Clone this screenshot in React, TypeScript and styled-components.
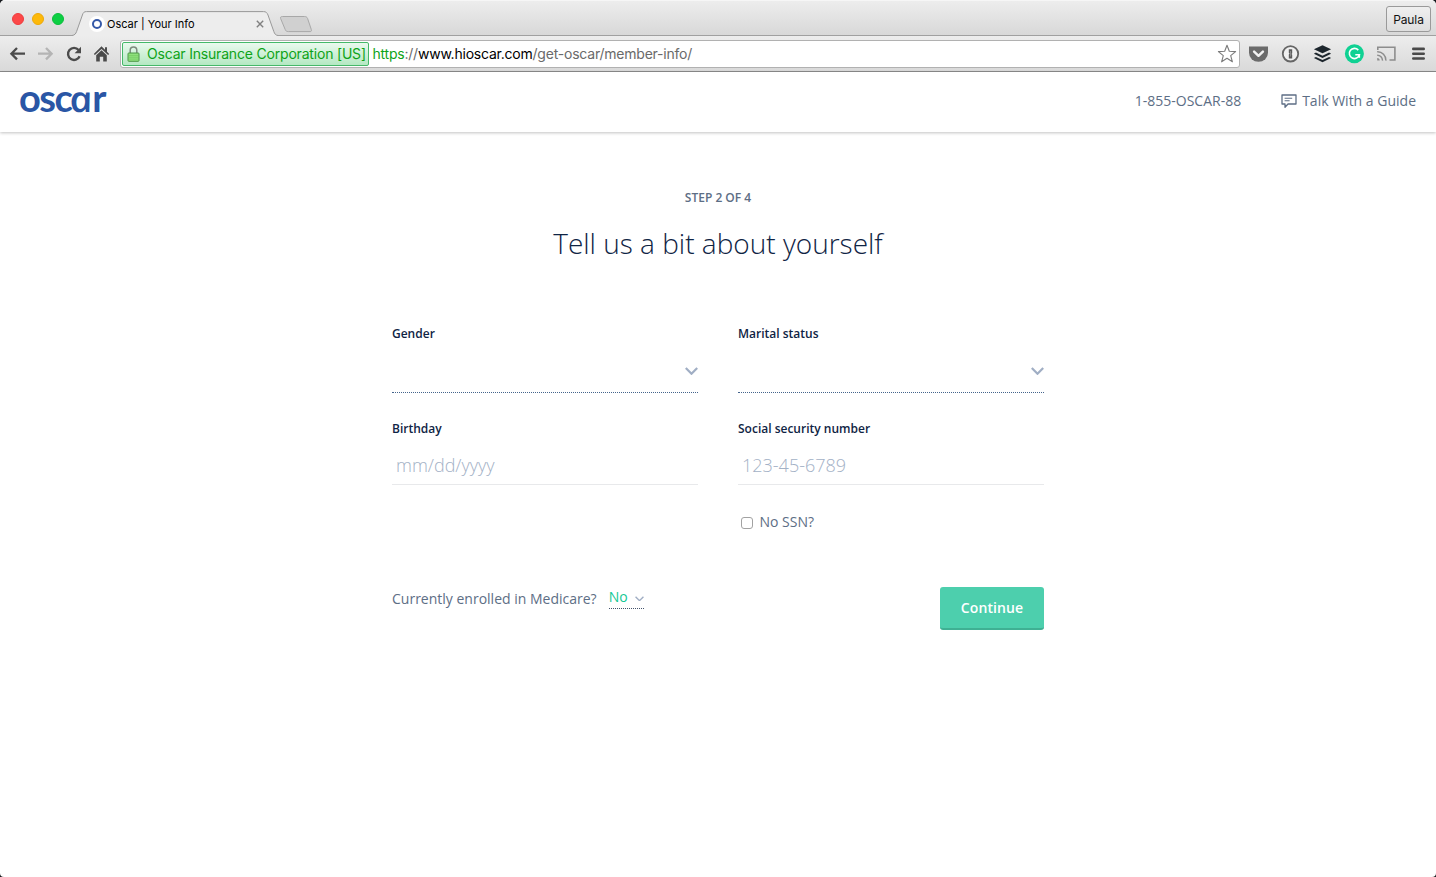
import React from "react";
import styled, { createGlobalStyle } from "styled-components";

const GlobalStyle = createGlobalStyle`
  * { box-sizing: border-box; }
  html, body { margin: 0; padding: 0; background: #16191d; }
  body { font-family: "Open Sans", "Noto Sans", sans-serif; overflow: hidden; }
`;

const Window = styled.div`
  display: flex;
  flex-direction: column;
  width: 1436px;
  height: 877px;
  background: #fff;
  border-radius: 5px 5px 4px 4px;
  overflow: hidden;
`;

const TitleBar = styled.div`
  display: flex;
  align-items: flex-start;
  height: 36px;
  padding: 0 5px 0 12px;
  background: linear-gradient(#ededed, #d8d8d8);
  border-bottom: 1px solid #a0a0a0;
  border-top: 1px solid #f6f6f6;
`;

const Lights = styled.div`
  display: flex;
  gap: 8px;
  margin: 12px 0 0;
`;

const Light = styled.span<{ $fill: string; $edge: string }>`
  width: 12px;
  height: 12px;
  border-radius: 50%;
  background: ${(p) => p.$fill};
  border: 1px solid ${(p) => p.$edge};
`;

const Tab = styled.div`
  position: relative;
  display: flex;
  align-items: center;
  width: 206px;
  height: 25px;
  margin: 10px 0 0 8px;
  padding: 1px 14px 0 17px;
`;

const TabShape = styled.svg`
  position: absolute;
  left: 0;
  top: 0;
`;

const Favicon = styled.span`
  position: relative;
  display: grid;
  place-items: center;
  width: 16px;
  height: 16px;
  border-radius: 50%;
  background: #fff;
  flex: none;
  &::before {
    content: "";
    width: 6px;
    height: 6px;
    border: 2px solid #3559a8;
    border-radius: 50%;
  }
`;

const TabTitle = styled.span`
  position: relative;
  flex: 1;
  margin-left: 2px;
  font: 11px/14px Inter, sans-serif;
  color: #000;
  white-space: nowrap;
`;

const CloseIcon = styled.svg`
  position: relative;
  flex: none;
`;

const NewTab = styled.svg`
  margin: 14px auto 0 1px;
`;

const UserButton = styled.button`
  width: 45px;
  height: 26px;
  margin-top: 5px;
  padding: 1px 0 0;
  border: 1px solid #9a9a9a;
  border-radius: 3px;
  background: linear-gradient(#efefef, #dedede);
  font: 12px/15px Inter, sans-serif;
  letter-spacing: -0.1px;
  color: #111;
`;

const Toolbar = styled.div`
  display: flex;
  align-items: center;
  height: 36px;
  padding: 0 8px 0 9px;
  background: linear-gradient(#ededed, #d9d9d9);
  border-bottom: 1px solid #8b8b8b;
`;

const NavIcons = styled.div`
  display: flex;
  gap: 10px;
  margin-right: 9px;
`;

const AddressBar = styled.div`
  display: flex;
  align-items: center;
  flex: none;
  width: 1120px;
  height: 28px;
  margin-right: 8px;
  padding: 0 2px 0 1px;
  border: 1px solid #b1b1b1;
  border-radius: 3px;
  background: #fff;
  font: 14px/18px Inter, sans-serif;
`;

const Certificate = styled.span`
  display: flex;
  align-items: center;
  width: 247px;
  height: 24px;
  padding-left: 4px;
  gap: 7px;
  border: 1px solid #45b869;
  border-radius: 2px;
  background: linear-gradient(#eaf9ee, #b4e8c2);
  color: #0ea318;
  white-space: nowrap;
`;

const CertName = styled.span`
  letter-spacing: -0.19px;
`;

const Url = styled.span`
  flex: 1;
  margin-left: 3.500px;
  color: #6a6a6a;
  letter-spacing: -0.22px;
`;

const UrlScheme = styled.span`
  color: #0ea318;
`;

const UrlHost = styled.span`
  color: #000;
`;

const Extensions = styled.div`
  display: flex;
  gap: 12px;
`;

const SiteHeader = styled.header`
  display: flex;
  align-items: center;
  justify-content: space-between;
  flex: none;
  height: 60px;
  padding: 0 20px 3px 19px;
  background: #fff;
  box-shadow: 0 1px 3px rgba(0, 0, 0, 0.24);
`;

const Logo = styled.a`
  display: flex;
  align-items: baseline;
  height: 40px;
  margin-bottom: 4px;
  font: 700 38px/36px Lato, sans-serif;
  letter-spacing: -1.5px;
  color: #2a56a5;
`;

/* Upright single-storey "a", made from the italic letterform. */
const RoundA = styled.span`
  display: inline-block;
  margin: 0 1px 0 0.5px;
  font: italic 600 36px/36px "Open Sans", sans-serif;
  transform: skewX(12deg) scaleX(1.1);
  transform-origin: 50% 80%;
`;

const HeaderLinks = styled.nav`
  display: flex;
  align-items: center;
  gap: 40px;
  font-size: 14px;
  line-height: 20px;
  color: #5d6e85;
`;

const GuideLink = styled.a`
  display: flex;
  align-items: center;
  gap: 5px;
`;

const Main = styled.main`
  display: flex;
  flex-direction: column;
  align-items: center;
  padding-top: 57px;
`;

const Step = styled.div`
  font-size: 12px;
  font-weight: 600;
  line-height: 18px;
  color: #5d6e85;
`;

const Title = styled.h1`
  margin: 16px 0 0;
  font-size: 28px;
  font-weight: 300;
  line-height: 40px;
  color: #0f2444;
`;

const Form = styled.form`
  display: grid;
  grid-template-columns: 306px 306px;
  column-gap: 40px;
  width: 652px;
  margin-top: 62px;
`;

const Field = styled.label<{ $height: number }>`
  display: flex;
  flex-direction: column;
  height: ${(p) => p.$height}px;
`;

const FieldLabel = styled.span`
  font-size: 12px;
  font-weight: 600;
  line-height: 18px;
  color: #0f2444;
`;

const SelectBox = styled.span`
  display: flex;
  align-items: center;
  justify-content: flex-end;
  height: 50px;
  padding-top: 7px;
  border-bottom: 1px dotted #44648c;
`;

const TextInput = styled.input`
  height: 47px;
  padding: 8px 4px 0;
  border: 0;
  border-bottom: 1px solid #e8e9eb;
  outline: 0;
  background: none;
  font: 300 18px/26px "Open Sans", sans-serif;
  &::placeholder {
    color: #a3b1c6;
    opacity: 1;
  }
`;

const CheckRow = styled.label`
  grid-column: 2;
  display: flex;
  align-items: center;
  gap: 6.5px;
  height: 20px;
  padding-left: 3px;
  font-size: 14px;
  color: #5d6e85;
`;

const Checkbox = styled.span`
  width: 12px;
  height: 12px;
  margin-top: 4px;
  border: 1px solid #a2a2a2;
  border-radius: 3px;
  background: #fff;
`;

const FormFooter = styled.div`
  grid-column: 1 / -1;
  display: flex;
  align-items: flex-start;
  margin-top: 56px;
`;

const Question = styled.span`
  margin: 2px 12px 0 0;
  font-size: 14px;
  line-height: 20px;
  color: #5d6e85;
`;

const InlineSelect = styled.span`
  display: flex;
  align-items: center;
  justify-content: space-between;
  width: 35px;
  height: 22px;
  margin-right: auto;
  padding-bottom: 1px;
  border-bottom: 1px dotted #44536b;
  font-size: 14px;
  line-height: 20px;
  color: #14c795;
  svg {
    margin-top: 3px;
  }
`;

const ContinueButton = styled.button`
  width: 104px;
  height: 43px;
  border: 0;
  border-bottom: 2px solid #3fb093;
  border-radius: 3px;
  background: #4dcfad;
  font: 600 14px/20px "Open Sans", sans-serif;
  letter-spacing: 0.1px;
  color: #fff;
`;

const Chevron = ({ size, weight }: { size: number; weight: number }) => (
  <svg width={size} height={size * 0.62} viewBox="0 0 13 8" fill="none" stroke="#a0aec4" strokeWidth={weight}>
    <path d="M.8 1 6.5 6.7 12.2 1" />
  </svg>
);

const BackIcon = ({ color, flip }: { color: string; flip?: boolean }) => (
  <svg width="18" height="18" viewBox="0 0 18 18" fill="none" stroke={color} strokeWidth="2.3">
    <g transform={flip ? "matrix(-1 0 0 1 17 0)" : undefined}>
      <path d="M8 3 2.4 8.700 8 14.400M2.6 8.700H16" />
    </g>
  </svg>
);

const ReloadIcon = () => (
  <svg width="18" height="18" viewBox="0 0 18 18">
    <path d="M14.6 11.2A6 6 0 1 1 13.6 5" fill="none" stroke="#4b4b4b" strokeWidth="2.4" />
    <path d="M16 1.8v6.4H9.6z" fill="#4b4b4b" />
  </svg>
);

const HomeIcon = () => (
  <svg width="18" height="18" viewBox="0 0 18 18" fill="#4b4b4b">
    <path d="M8.500 1.300 .8 9l1.100 1.100L8.500 3.900l6.600 6.200L16.200 9l-2.200-2.200V2.300h-2v2.500z" />
    <path d="M8.500 5.300 3.200 10.300v6.300h3.600v-4.800h3.400v4.800h3.600v-6.300z" />
  </svg>
);

const LockIcon = () => (
  <svg width="13" height="16" viewBox="0 0 13 16">
    <path d="M3.2 8V4.3a3.3 3.3 0 0 1 6.6 0V8" fill="none" stroke="#7d8a7d" strokeWidth="1.5" />
    <rect x="1" y="7" width="11" height="8.3" rx=".8" fill="#8fe07c" stroke="#4d9646" />
    <path d="M2 9.5h9M2 11.3h9M2 13.1h9" stroke="#74cb62" strokeWidth=".7" />
  </svg>
);

const StarIcon = () => (
  <svg width="20" height="20" viewBox="0 0 20 20" fill="#fff" stroke="#7b7b7b" strokeWidth="1.1" strokeLinejoin="round">
    <path d="m10 1.300 2.300 6 6.3.3-4.9 4 1.7 6.200L10 14.300l-5.400 3.500L6.300 11.600l-4.900-4 6.3-.3z" />
  </svg>
);

const PocketIcon = () => (
  <svg width="20" height="20" viewBox="0 0 20 20">
    <path d="M1 2.400h19v6.400a9.500 9 0 0 1-19 0z" fill="#6b6b6b" />
    <path d="m6.100 7.600 4.400 4.200 4.400-4.200" fill="none" stroke="#f2f2f2" strokeWidth="2.5" strokeLinecap="round" strokeLinejoin="round" />
  </svg>
);

const KeyholeIcon = () => (
  <svg width="20" height="20" viewBox="0 0 20 20">
    <circle cx="10.500" cy="9.800" r="7.7" fill="#f0f0f0" stroke="#666" strokeWidth="1.8" />
    <path d="M8.800 5.200h3.400v4l-.7.8.7.8v3.600H8.800v-4l.7-.8-.7-.8z" fill="#5c5c5c" />
    <path d="M10.500 7v5.500" stroke="#aaa" strokeWidth=".6" />
  </svg>
);

const BufferIcon = () => (
  <svg width="20" height="20" viewBox="0 0 20 20" fill="#1d262d">
    <path d="m10.500 1.300 8.600 4-8.600 4-8.600-4zM3.900 8.600l6.600 3.100 6.600-3.100 2 1.100-8.600 4.200-8.600-4.200zM3.900 13l6.600 3.100 6.600-3.100 2 1.100-8.600 4.200-8.600-4.200z" />
  </svg>
);

const GrammarIcon = () => (
  <svg width="20" height="20" viewBox="0 0 20 20">
    <circle cx="10.400" cy="9.700" r="9.500" fill="#10d193" />
    <path d="M14.300 6.100A5.100 5.100 0 1 0 15.400 10.700H11.300M15.300 10.200v3.600" fill="none" stroke="#fff" strokeWidth="1.6" />
  </svg>
);

const CastIcon = () => (
  <svg width="20" height="20" viewBox="0 0 20 20" fill="none" stroke="#8d8d8d" strokeWidth="1.6">
    <path d="M1.800 6V3.200h17.100v12.800h-5.400" />
    <path d="M1.200 7.800a8.300 8.300 0 0 1 8.700 8.800M1.200 11.200a5.200 5.200 0 0 1 5.300 5.400" strokeWidth="1.500" />
    <path d="M1.200 14.100a2.500 2.500 0 0 1 2.500 2.500H1.200z" fill="#8d8d8d" stroke="none" />
  </svg>
);

const MenuIcon = () => (
  <svg width="20" height="20" viewBox="0 0 20 20" stroke="#4a4a4a" strokeWidth="2.6" strokeLinecap="round">
    <path d="M5.300 4.900h10.400M5.300 9.700h10.400M5.300 14.500h10.400" />
  </svg>
);

const ChatIcon = () => (
  <svg width="16" height="14" viewBox="0 0 16 14" fill="none" stroke="#5d6e85" strokeWidth="1.3">
    <path d="M1 1h14v9H7L4 13.200V10H1z" strokeLinejoin="round" />
    <path d="M3.6 4.2h7.6M3.6 6.8h5" strokeWidth="1.1" />
  </svg>
);

export default function App() {
  return (
    <>
      <GlobalStyle />
      <Window>
        <TitleBar>
          <Lights>
            <Light $fill="#fc4848" $edge="#ee3c3e" />
            <Light $fill="#fdb90a" $edge="#eda909" />
            <Light $fill="#0dcf43" $edge="#0bbd3b" />
          </Lights>
          <Tab>
            <TabShape width="206" height="25" viewBox="0 0 206 25">
              <path
                d="M0 24.5C3 24.2 3.8 22.5 4.6 20.5L10.4 4C11.2 1.6 12 .6 14.5 .6H191.5C194 .6 195 1.6 196 4L201.8 20.5C202.600 22.8 203.500 24.2 206 24.5V25H0z"
                fill="#ededed"
              />
              <path
                d="M0 24.5C3 24.2 3.8 22.5 4.6 20.5L10.4 4C11.2 1.6 12 .6 14.5 .6H191.5C194 .6 195 1.6 196 4L201.8 20.5C202.600 22.8 203.500 24.2 206 24.5"
                fill="none"
                stroke="#999"
              />
            </TabShape>
            <Favicon />
            <TabTitle>Oscar | Your Info</TabTitle>
            <CloseIcon width="8" height="8" viewBox="0 0 8 8" stroke="#808080" strokeWidth="1.4">
              <path d="m.8 .8 6.4 6.4M7.2 .8 .8 7.2" />
            </CloseIcon>
          </Tab>
          <NewTab width="34" height="18" viewBox="0 0 34 18">
            <path
              d="M3.5 1.5H25.5C27 1.5 28 2 28.6 3.5L32.3 14.5C32.8 16 32.2 16.6 31 16.6H9.5C7.5 16.6 6.8 16 6.2 14.5L1.6 3.5C1.2 2.2 1.8 1.5 3.5 1.5z"
              fill="#d0d0d0"
              stroke="#a8a8a8"
            />
          </NewTab>
          <UserButton>Paula</UserButton>
        </TitleBar>

        <Toolbar>
          <NavIcons>
            <BackIcon color="#4b4b4b" />
            <BackIcon color="#b4b4b4" flip />
            <ReloadIcon />
            <HomeIcon />
          </NavIcons>
          <AddressBar>
            <Certificate>
              <LockIcon />
              <CertName>Oscar Insurance Corporation [US]</CertName>
            </Certificate>
            <Url>
              <UrlScheme>https</UrlScheme>://<UrlHost>www.hioscar.com</UrlHost>/get-oscar/member-info/
            </Url>
            <StarIcon />
          </AddressBar>
          <Extensions>
            <PocketIcon />
            <KeyholeIcon />
            <BufferIcon />
            <GrammarIcon />
            <CastIcon />
            <MenuIcon />
          </Extensions>
        </Toolbar>

        <SiteHeader>
          <Logo>
            <span>osc</span>
            <RoundA>a</RoundA>
            <span>r</span>
          </Logo>
          <HeaderLinks>
            <span>1-855-OSCAR-88</span>
            <GuideLink>
              <ChatIcon />
              Talk With a Guide
            </GuideLink>
          </HeaderLinks>
        </SiteHeader>

        <Main>
          <Step>STEP 2 OF 4</Step>
          <Title>Tell us a bit about yourself</Title>
          <Form>
            <Field $height={95}>
              <FieldLabel>Gender</FieldLabel>
              <SelectBox>
                <Chevron size={13} weight={2.2} />
              </SelectBox>
            </Field>
            <Field $height={95}>
              <FieldLabel>Marital status</FieldLabel>
              <SelectBox>
                <Chevron size={13} weight={2.2} />
              </SelectBox>
            </Field>
            <Field $height={91}>
              <FieldLabel>Birthday</FieldLabel>
              <TextInput placeholder="mm/dd/yyyy" />
            </Field>
            <Field $height={91}>
              <FieldLabel>Social security number</FieldLabel>
              <TextInput placeholder="123-45-6789" />
            </Field>
            <CheckRow>
              <Checkbox />
              No SSN?
            </CheckRow>
            <FormFooter>
              <Question>Currently enrolled in Medicare?</Question>
              <InlineSelect>
                No
                <Chevron size={9} weight={2} />
              </InlineSelect>
              <ContinueButton type="button">Continue</ContinueButton>
            </FormFooter>
          </Form>
        </Main>
      </Window>
    </>
  );
}
